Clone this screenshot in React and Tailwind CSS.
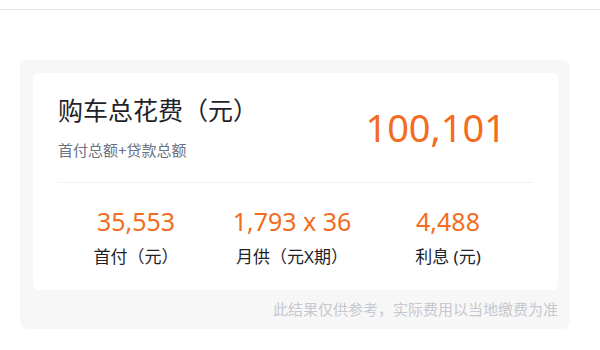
import React from "react";

const items = [
  { value: "35,553", label: "首付（元）" },
  { value: "1,793 x 36", label: "月供（元X期）" },
  { value: "4,488", label: "利息 (元)" },
];

const App = () => {
  return (
    <div
      className="w-[600px] h-[350px] bg-white overflow-hidden"
      style={{ fontFamily: '"Noto Sans", "Noto Sans CJK SC", sans-serif' }}
    >
      <div className="h-[10px] border-b border-[#e8e8e8]"></div>

      <div className="pl-[20px] mt-[50px] w-[570px]">
        <div className="bg-[#f7f7f7] rounded-lg pt-[13px] pl-[13px] pr-[12px] pb-[10px]">
          <div className="bg-white rounded-md px-[25px] h-[217px]">
            <div className="flex items-start justify-between pt-[21px] h-[110px] border-b border-[#f2f2f2]">
              <div>
                <h1 className="text-[25px] leading-[32px] text-[#1f2329]">购车总花费（元）</h1>
                <p className="mt-[14px] text-[15px] leading-[20px] text-[#6b7280]">首付总额+贷款总额</p>
              </div>
              <div className="pr-[27px] pt-[8px] text-[38px] leading-[50px] text-[#f36c21]">100,101</div>
            </div>

            <div className="grid grid-cols-3 pt-[22px] pr-[7px] text-center">
              {items.map((it) => (
                <div key={it.label} className="flex flex-col items-center">
                  <span className="text-[25px] leading-[32px] text-[#f36c21]">{it.value}</span>
                  <span className="mt-[8px] text-[17px] leading-[24px] text-[#1f2329]">{it.label}</span>
                </div>
              ))}
            </div>
          </div>

          <p className="mt-[9px] text-right text-[15px] leading-[20px] text-[#c5c8ce]">
            此结果仅供参考，实际费用以当地缴费为准
          </p>
        </div>
      </div>
    </div>
  );
};

export default App;
